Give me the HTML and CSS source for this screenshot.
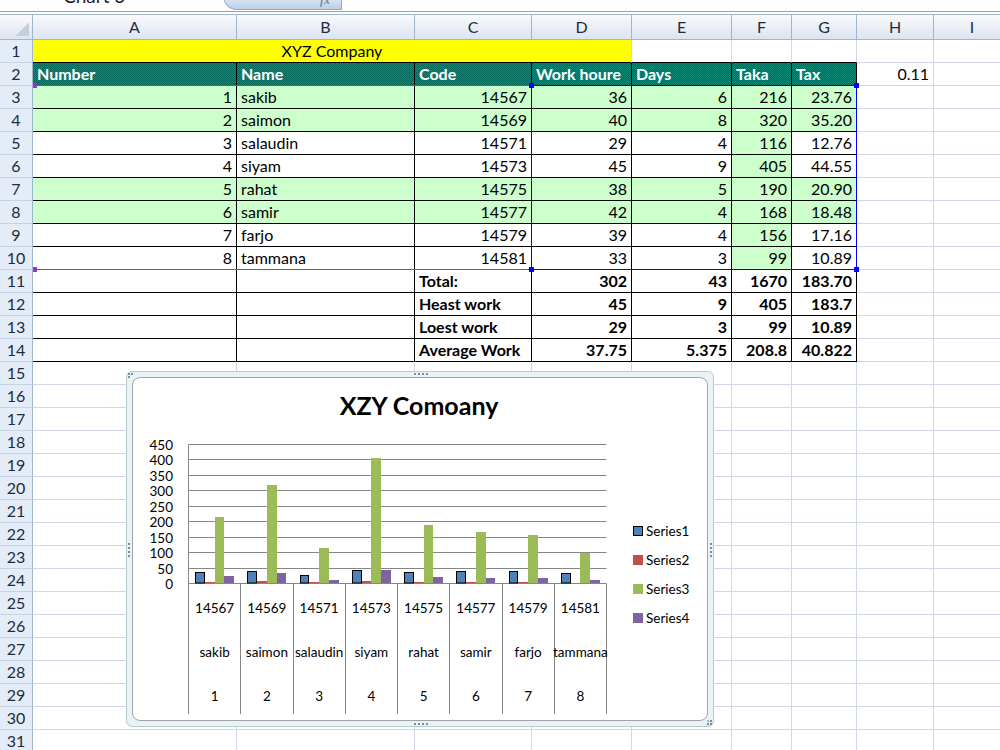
FILE: index.html
```html
<!DOCTYPE html>
<html lang="en">
<head>
    <meta charset="UTF-8">
    <meta name="viewport" content="width=device-width, initial-scale=1.0">
    <title>XYZ Company - Book1</title>
    <link rel="stylesheet" href="styles.css">
</head>
<body>

    <div class="formula-bar">
        <div class="name-box">Chart 3</div>
        <div class="fx-btn">fx</div>
    </div>

    <div class="sheet-wrap">
        <div class="sheet">
            <div class="corner"></div><div class="ch">A</div><div class="ch">B</div><div class="ch">C</div><div class="ch">D</div><div class="ch">E</div><div class="ch">F</div><div class="ch">G</div><div class="ch">H</div><div class="ch">I</div>

            <div class="rh">1</div><div class="y bt">XYZ Company</div><div class="bt"></div><div class="bt"></div><div class="bt"></div><div></div><div></div>
            <div class="rh">2</div><div class="hd b">Number</div><div class="hd b">Name</div><div class="hd b">Code</div><div class="hd b">Work houre</div><div class="hd b">Days</div><div class="hd b">Taka</div><div class="hd b">Tax</div><div class="r">0.11</div><div></div>
            <div class="rh">3</div><div class="b g r">1</div><div class="b g">sakib</div><div class="b g r">14567</div><div class="b g r">36</div><div class="b g r">6</div><div class="b g r">216</div><div class="b g r">23.76</div><div></div><div></div>
            <div class="rh">4</div><div class="b g r">2</div><div class="b g">saimon</div><div class="b g r">14569</div><div class="b g r">40</div><div class="b g r">8</div><div class="b g r">320</div><div class="b g r">35.20</div><div></div><div></div>
            <div class="rh">5</div><div class="b r">3</div><div class="b">salaudin</div><div class="b r">14571</div><div class="b r">29</div><div class="b r">4</div><div class="b g r">116</div><div class="b r">12.76</div><div></div><div></div>
            <div class="rh">6</div><div class="b r">4</div><div class="b">siyam</div><div class="b r">14573</div><div class="b r">45</div><div class="b r">9</div><div class="b g r">405</div><div class="b r">44.55</div><div></div><div></div>
            <div class="rh">7</div><div class="b g r">5</div><div class="b g">rahat</div><div class="b g r">14575</div><div class="b g r">38</div><div class="b g r">5</div><div class="b g r">190</div><div class="b g r">20.90</div><div></div><div></div>
            <div class="rh">8</div><div class="b g r">6</div><div class="b g">samir</div><div class="b g r">14577</div><div class="b g r">42</div><div class="b g r">4</div><div class="b g r">168</div><div class="b g r">18.48</div><div></div><div></div>
            <div class="rh">9</div><div class="b r">7</div><div class="b">farjo</div><div class="b r">14579</div><div class="b r">39</div><div class="b r">4</div><div class="b g r">156</div><div class="b r">17.16</div><div></div><div></div>
            <div class="rh">10</div><div class="b r">8</div><div class="b">tammana</div><div class="b r">14581</div><div class="b r">33</div><div class="b r">3</div><div class="b g r">99</div><div class="b r">10.89</div><div></div><div></div>
            <div class="rh">11</div><div class="b"></div><div class="b"></div><div class="b t">Total:</div><div class="b t r">302</div><div class="b t r">43</div><div class="b t r">1670</div><div class="b t r">183.70</div><div></div><div></div>
            <div class="rh">12</div><div class="b"></div><div class="b"></div><div class="b t">Heast work</div><div class="b t r">45</div><div class="b t r">9</div><div class="b t r">405</div><div class="b t r">183.7</div><div></div><div></div>
            <div class="rh">13</div><div class="b"></div><div class="b"></div><div class="b t">Loest work</div><div class="b t r">29</div><div class="b t r">3</div><div class="b t r">99</div><div class="b t r">10.89</div><div></div><div></div>
            <div class="rh">14</div><div class="b"></div><div class="b"></div><div class="b t">Average Work</div><div class="b t r">37.75</div><div class="b t r">5.375</div><div class="b t r">208.8</div><div class="b t r">40.822</div><div></div><div></div>

            <div class="rh">15</div><div></div><div></div><div></div><div></div><div></div><div></div><div></div><div></div><div></div>
            <div class="rh">16</div><div></div><div></div><div></div><div></div><div></div><div></div><div></div><div></div><div></div>
            <div class="rh">17</div><div></div><div></div><div></div><div></div><div></div><div></div><div></div><div></div><div></div>
            <div class="rh">18</div><div></div><div></div><div></div><div></div><div></div><div></div><div></div><div></div><div></div>
            <div class="rh">19</div><div></div><div></div><div></div><div></div><div></div><div></div><div></div><div></div><div></div>
            <div class="rh">20</div><div></div><div></div><div></div><div></div><div></div><div></div><div></div><div></div><div></div>
            <div class="rh">21</div><div></div><div></div><div></div><div></div><div></div><div></div><div></div><div></div><div></div>
            <div class="rh">22</div><div></div><div></div><div></div><div></div><div></div><div></div><div></div><div></div><div></div>
            <div class="rh">23</div><div></div><div></div><div></div><div></div><div></div><div></div><div></div><div></div><div></div>
            <div class="rh">24</div><div></div><div></div><div></div><div></div><div></div><div></div><div></div><div></div><div></div>
            <div class="rh">25</div><div></div><div></div><div></div><div></div><div></div><div></div><div></div><div></div><div></div>
            <div class="rh">26</div><div></div><div></div><div></div><div></div><div></div><div></div><div></div><div></div><div></div>
            <div class="rh">27</div><div></div><div></div><div></div><div></div><div></div><div></div><div></div><div></div><div></div>
            <div class="rh">28</div><div></div><div></div><div></div><div></div><div></div><div></div><div></div><div></div><div></div>
            <div class="rh">29</div><div></div><div></div><div></div><div></div><div></div><div></div><div></div><div></div><div></div>
            <div class="rh">30</div><div></div><div></div><div></div><div></div><div></div><div></div><div></div><div></div><div></div>
            <div class="rh">31</div><div></div><div></div><div></div><div></div><div></div><div></div><div></div><div></div><div></div>
        </div>

        <!-- chart source ranges: categories A3:C10, values D3:G10 -->
        <div class="sel-cat">
            <span class="handle purple tl"></span>
            <span class="handle purple bl"></span>
        </div>
        <div class="sel-val">
            <span class="handle blue tl"></span>
            <span class="handle blue tr"></span>
            <span class="handle blue bl"></span>
            <span class="handle blue br"></span>
        </div>

        <div class="chart">
            <span class="grip corner-tl"></span>
            <span class="grip corner-br"></span>
            <span class="grip mid-top"></span>
            <span class="grip mid-bottom"></span>
            <span class="grip mid-left"></span>
            <span class="grip mid-right"></span>
            <div class="chart-body">
                <svg id="chart-plot" width="574" height="342"></svg>
            </div>
        </div>
    </div>

    <script>
        (function () {
            const NS = 'http://www.w3.org/2000/svg';
            const svg = document.getElementById('chart-plot');

            const codes = ['14567', '14569', '14571', '14573', '14575', '14577', '14579', '14581'];
            const names = ['sakib', 'saimon', 'salaudin', 'siyam', 'rahat', 'samir', 'farjo', 'tammana'];
            const series = [
                { name: 'Series1', color: '#4f81bd', values: [36, 40, 29, 45, 38, 42, 39, 33] },
                { name: 'Series2', color: '#c0504d', values: [6, 8, 4, 9, 5, 4, 4, 3] },
                { name: 'Series3', color: '#9bbb59', values: [216, 320, 116, 405, 190, 168, 156, 99] },
                { name: 'Series4', color: '#8064a2', values: [23.76, 35.2, 12.76, 44.55, 20.9, 18.48, 17.16, 10.89] }
            ];

            // plot area inside the chart
            const plotLeft = 55.5, plotRight = 473.5, plotTop = 66.5, plotBottom = 205.5, axisEnd = 336;
            const maxValue = 450;
            const scale = (plotBottom - plotTop) / maxValue;
            const catWidth = (plotRight - plotLeft) / codes.length;
            const barWidth = 9.75, barOffset = 6.6;

            function add(tag, attrs, text) {
                const el = document.createElementNS(NS, tag);
                for (const key in attrs) el.setAttribute(key, attrs[key]);
                if (text !== undefined) el.textContent = text;
                svg.appendChild(el);
                return el;
            }

            add('text', { x: 286, y: 37, class: 'chart-title' }, 'XZY Comoany');

            // value gridlines + labels
            for (let v = 0; v <= maxValue; v += 50) {
                const y = Math.round(plotBottom - v * scale - 0.5) + 0.5;
                add('line', { x1: plotLeft, x2: plotRight, y1: y, y2: y, class: 'grid' });
                add('text', { x: 40, y: y + 5, class: 'axis-label' }, v);
            }

            // category dividers (multi level axis)
            for (let i = 0; i <= codes.length; i++) {
                const x = Math.round(plotLeft + i * catWidth - 0.5) + 0.5;
                add('line', { x1: x, x2: x, y1: i === 0 ? plotTop : plotBottom, y2: axisEnd, class: 'grid' });
            }

            // bars
            series.forEach((s, si) => {
                s.values.forEach((v, i) => {
                    const x0 = Math.round(plotLeft + i * catWidth + barOffset + si * barWidth);
                    const x1 = Math.round(plotLeft + i * catWidth + barOffset + (si + 1) * barWidth);
                    const y = Math.round(plotBottom - v * scale);
                    if (si === 0) {
                        add('rect', { x: x0 + 0.5, y: y + 0.5, width: x1 - x0 - 1, height: plotBottom - y - 1, fill: s.color, class: 'outlined' });
                    } else {
                        add('rect', { x: x0, y: y, width: x1 - x0, height: plotBottom - 0.5 - y, fill: s.color });
                    }
                });
            });

            // category labels
            codes.forEach((code, i) => {
                const cx = plotLeft + (i + 0.5) * catWidth;
                add('text', { x: cx, y: 235, class: 'cat-label' }, code);
                add('text', { x: cx, y: 278.5, class: 'cat-label' }, names[i]);
                add('text', { x: cx, y: 323, class: 'cat-label' }, i + 1);
            });

            // legend
            series.forEach((s, si) => {
                const cy = 153 + si * 29;
                if (si === 0) {
                    add('rect', { x: 500.5, y: cy - 4.5, width: 9, height: 9, fill: s.color, class: 'outlined' });
                } else {
                    add('rect', { x: 500, y: cy - 5, width: 10, height: 10, fill: s.color });
                }
                add('text', { x: 513, y: cy + 5, class: 'legend-label' }, s.name);
            });
        })();
    </script>

</body>
</html>
```

FILE: styles.css
```css
body {
    margin: 0;
    width: 1000px;
    height: 750px;
    overflow: hidden;
    background: #fff;
    font-family: Lato, "Liberation Sans", Arial, sans-serif;
    font-size: 16px;
    color: #000;
}

/* formula bar (cut off at the top) */
.formula-bar {
    height: 11px;
    display: flex;
    overflow: hidden;
    border-bottom: 1px solid #8ea2bb;
    margin-bottom: 2px;
}
.name-box {
    width: 160px;
    padding-left: 63px;
    margin-top: -15px;
    font-size: 19px;
    line-height: 22px;
    color: #1c1c1c;
}
.fx-btn {
    width: 119px;
    height: 15px;
    margin-top: -5px;
    box-sizing: border-box;
    border: 1px solid #94a9c4;
    border-top: none;
    border-radius: 0 0 0 14px;
    background: linear-gradient(#e6eef8, #bccfe7);
    display: flex;
    justify-content: flex-end;
    align-items: flex-end;
    padding: 0 11px 4px 0;
    font: italic bold 12px "Liberation Serif", serif;
    line-height: 10px;
    color: #7f8c9b;
}

/* grid */
.sheet-wrap {
    position: relative;
}
.sheet {
    display: grid;
    grid-template-columns: 33px 204px 178px 117px 100px 100px 60px 65px 77px 77px;
    grid-template-rows: 26px;
    grid-auto-rows: 23px;
}
.sheet > div {
    box-sizing: border-box;
    border-right: 1px solid #d0d7e5;
    border-bottom: 1px solid #d0d7e5;
    padding: 0 4px 0 4px;
    display: flex;
    align-items: center;
    white-space: nowrap;
    overflow: hidden;
    line-height: 1;
}

.sheet > .corner,
.sheet > .ch {
    border-top: 1px solid #9eb6ce;
    border-right-color: #9eb6ce;
    border-bottom-color: #9eb6ce;
    background: linear-gradient(#f8fafd, #e9eef6 55%, #dce4ef);
}
.sheet > .ch {
    justify-content: center;
    color: #1f2c3d;
}
.sheet > .corner {
    position: relative;
}
.sheet > .corner::after {
    content: "";
    position: absolute;
    right: 3px;
    bottom: 3px;
    width: 14px;
    height: 14px;
    background: linear-gradient(135deg, transparent 50%, #c6ced9 50%);
}
.sheet > .rh {
    justify-content: center;
    padding: 0;
    background: #e4ecf7;
    border-right-color: #9eb6ce;
    border-bottom-color: #c5d3e2;
    color: #1f2c3d;
}

.sheet > .r {
    justify-content: flex-end;
}
.sheet > .b {
    border-right-color: #000;
    border-bottom-color: #000;
}
.sheet > .bt {
    border-bottom-color: #000;
}
.sheet > .g {
    background: #ccffcc;
}
.sheet > .t {
    font-weight: bold;
}
.sheet > .y {
    grid-column: span 4;
    justify-content: center;
    background: #ffff00;
}
.sheet > .hd {
    background: repeating-conic-gradient(#0f8a78 0 25%, #03685a 0 50%) 0 0 / 2px 2px;
    color: #fff;
    font-weight: bold;
}

/* chart data range highlights */
.sel-cat,
.sel-val {
    position: absolute;
    top: 71px;
    height: 185px;
    box-sizing: border-box;
}
.sel-cat {
    left: 33px;
    width: 499px;
    border-top: 1px solid #9933cc;
    border-bottom: 1px solid #9933cc;
}
.sel-val {
    left: 531px;
    width: 326px;
    border: 1px solid #0000ff;
}
.handle {
    position: absolute;
    width: 5px;
    height: 5px;
}
.handle.purple { background: #9933cc; width: 4px; }
.handle.blue { background: #0000ff; }
.sel-cat .tl { left: 0; top: -3px; }
.sel-cat .bl { left: 0; bottom: -3px; }
.sel-val .tl { left: -3px; top: -3px; }
.sel-val .tr { right: -3px; top: -3px; }
.sel-val .bl { left: -3px; bottom: -3px; }
.sel-val .br { right: -3px; bottom: -3px; }

/* chart object */
.chart {
    position: absolute;
    left: 126px;
    top: 357px;
    width: 588px;
    height: 356px;
    box-sizing: border-box;
    border: 1px solid #b7cbd3;
    border-radius: 6px;
    padding: 5px;
    background: #e9f3f6;
}
.chart-body {
    height: 100%;
    box-sizing: border-box;
    border: 1px solid #a3a3a3;
    border-radius: 8px;
    background: #fff;
    overflow: hidden;
}
.chart-body svg {
    display: block;
}

.grip {
    position: absolute;
}
.grip.mid-top,
.grip.mid-bottom {
    left: 287px;
    width: 14px;
    height: 2px;
    background: repeating-linear-gradient(90deg, #7d8d9c 0 2px, transparent 2px 4px);
}
.grip.mid-top { top: 1px; }
.grip.mid-bottom { bottom: 1px; }
.grip.mid-left,
.grip.mid-right {
    top: 171px;
    width: 2px;
    height: 14px;
    background: repeating-linear-gradient(180deg, #7d8d9c 0 2px, transparent 2px 4px);
}
.grip.mid-left { left: 1px; }
.grip.mid-right { right: 1px; }
.grip.corner-tl,
.grip.corner-br {
    width: 2px;
    height: 2px;
    background: #7d8d9c;
}
.grip.corner-tl {
    left: 1px;
    top: 1px;
    box-shadow: 3px 0 #7d8d9c, 0 3px #7d8d9c;
}
.grip.corner-br {
    right: 1px;
    bottom: 1px;
    box-shadow: -3px 0 #7d8d9c, 0 -3px #7d8d9c, -3px -3px #a9b6c2;
}

/* chart drawing */
.grid {
    stroke: #868686;
    stroke-width: 1;
}
.outlined {
    stroke: #000;
    stroke-width: 1;
}
.chart-title {
    font-size: 25px;
    font-weight: bold;
    text-anchor: middle;
}
.axis-label {
    font-size: 13.5px;
    text-anchor: end;
}
.cat-label {
    font-size: 13.5px;
    text-anchor: middle;
}
.legend-label {
    font-size: 13.5px;
}
```
